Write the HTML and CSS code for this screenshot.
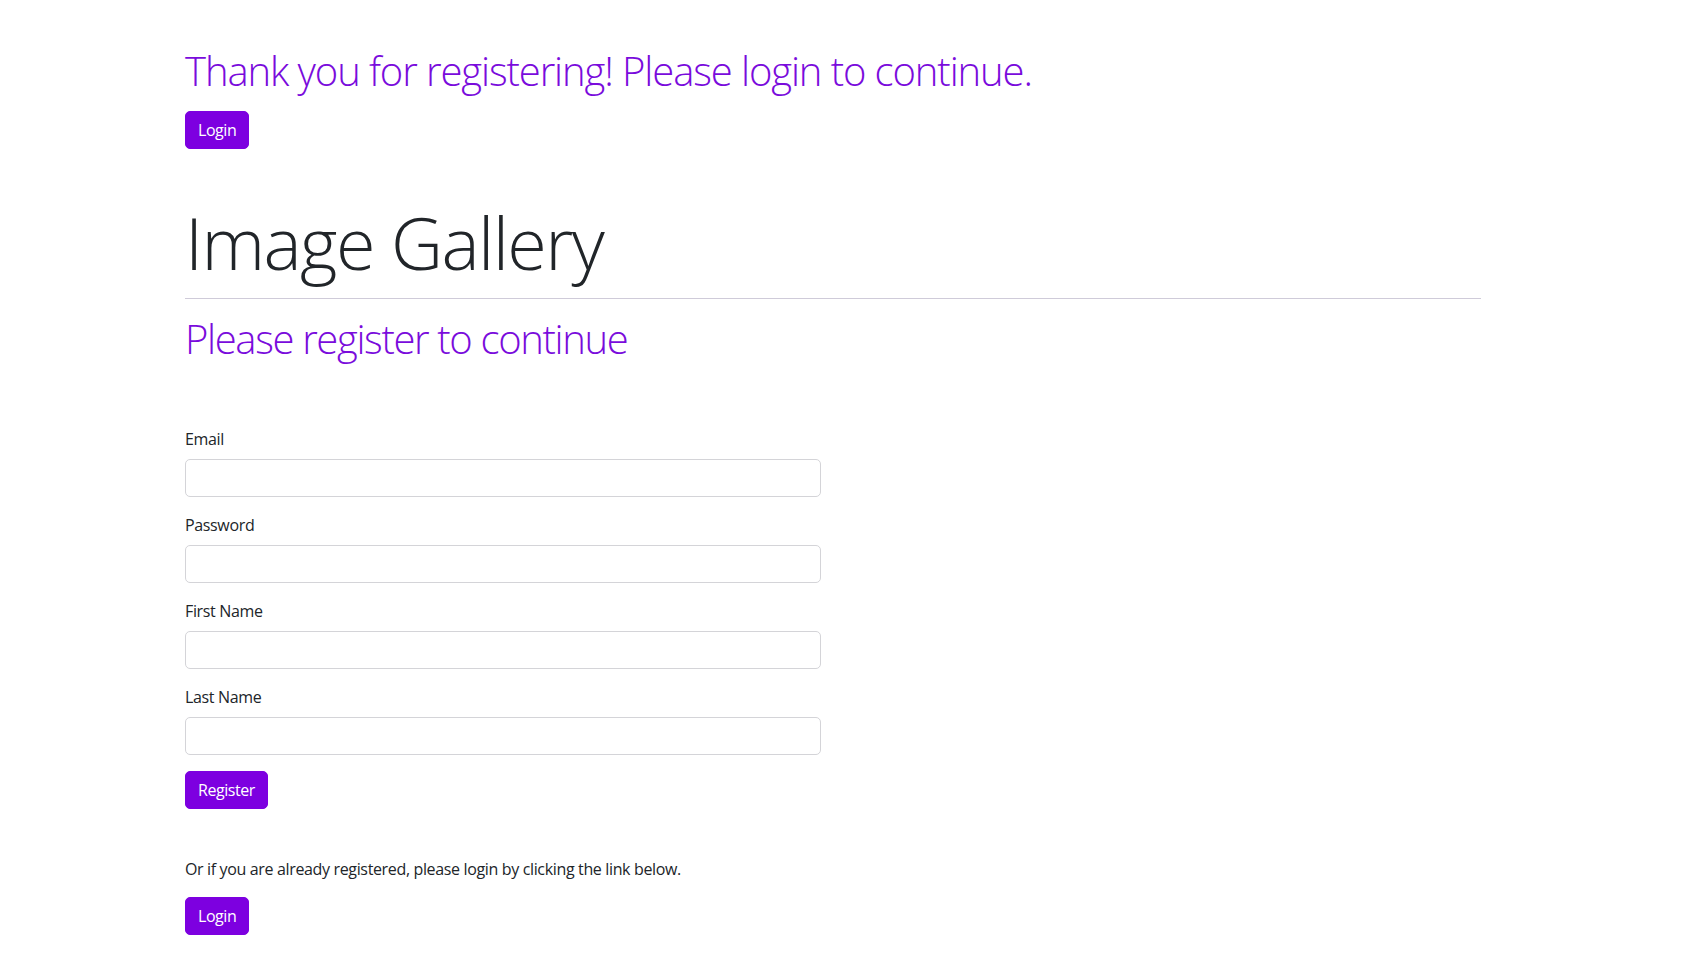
FILE: index.html
```html
<!DOCTYPE html>
<html lang="en">
<head>
<meta charset="utf-8">
<title>Image Gallery</title>
<link rel="stylesheet" href="styles.css">
</head>
<body>
<div class="container">
  <section class="notice">
    <h1 class="notice-title">Thank you for registering! Please login to continue.</h1>
    <a class="btn" href="#">Login</a>
  </section>

  <header class="page-header">
    <h1 class="display-title">Image Gallery</h1>
    <hr class="divider">
    <h2 class="sub-title">Please register to continue</h2>
  </header>

  <div class="row">
    <form class="col-half register-form">
      <div class="field">
        <label class="field-label" for="email">Email</label>
        <input class="field-input" id="email" type="email">
      </div>
      <div class="field">
        <label class="field-label" for="password">Password</label>
        <input class="field-input" id="password" type="password">
      </div>
      <div class="field">
        <label class="field-label" for="first">First Name</label>
        <input class="field-input" id="first" type="text">
      </div>
      <div class="field">
        <label class="field-label" for="last">Last Name</label>
        <input class="field-input" id="last" type="text">
      </div>
      <button class="btn" type="button">Register</button>
    </form>
  </div>

  <section class="login-hint">
    <p class="hint-text">Or if you are already registered, please login by clicking the link below.</p>
    <a class="btn" href="#">Login</a>
  </section>
</div>
</body>
</html>
```

FILE: styles.css
```css
* { box-sizing: border-box; }

html, body {
  margin: 0;
  padding: 0;
  background: #ffffff;
}

body {
  font-family: "Segoe UI", "Open Sans", "Noto Sans", sans-serif;
  font-size: 16px;
  line-height: 1.5;
  letter-spacing: -0.35px;
  color: #212529;
}

.container {
  width: 1296px;
  margin-left: 185px;
  padding-top: 47px;
  padding-bottom: 40px;
}

.notice-title {
  margin: 0 0 16px;
  font-size: 40px;
  font-weight: 300;
  line-height: 1.2;
  letter-spacing: -1.1px;
  color: #7a0bdc;
}

.btn {
  display: inline-block;
  height: 38px;
  padding: 6px 12px;
  font-family: inherit;
  font-size: 16px;
  line-height: 24px;
  letter-spacing: -0.45px;
  color: #ffffff;
  background: #7d00e0;
  border: 1px solid #7d00e0;
  border-radius: 5px;
  text-decoration: none;
  cursor: pointer;
}

.page-header {
  margin-top: 50px;
}

.display-title {
  margin: 0;
  font-size: 72px;
  font-weight: 300;
  line-height: 1.2;
  letter-spacing: -1.6px;
  color: #212529;
}

.divider {
  margin: 13px 0 16px;
  border: 0;
  border-top: 1px solid #cfcbd9;
  height: 0;
}

.sub-title {
  margin: 0;
  font-size: 40px;
  font-weight: 300;
  line-height: 1.2;
  letter-spacing: -1.35px;
  color: #7a0bdc;
}

.row {
  display: flex;
  margin-top: 64px;
}

.col-half {
  width: 636px;
}

.field {
  margin-bottom: 16px;
}

.field-label {
  display: block;
  margin-bottom: 8px;
  font-size: 16px;
  line-height: 24px;
}

.field-input {
  display: block;
  width: 100%;
  height: 38px;
  padding: 6px 12px;
  font-family: inherit;
  font-size: 16px;
  color: #212529;
  background: #ffffff;
  border: 1px solid #d4d4d8;
  border-radius: 5px;
}

.login-hint {
  margin-top: 48px;
}

.hint-text {
  margin: 0 0 16px;
}
```
